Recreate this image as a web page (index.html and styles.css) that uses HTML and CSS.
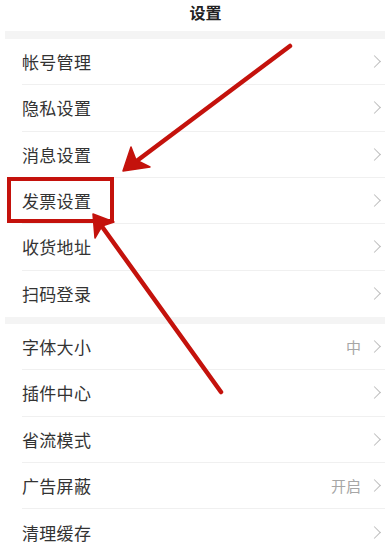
FILE: index.html
```html
<!DOCTYPE html>
<html lang="zh">
<head>
<meta charset="utf-8">
<title>设置</title>
<link rel="stylesheet" href="styles.css">
</head>
<body>
<div class="page">
  <header class="title">设置</header>
  <div class="band"></div>
  <ul class="group">
    <li class="row"><span class="label">帐号管理</span><span class="right"><span class="chev"></span></span></li>
    <li class="row"><span class="label">隐私设置</span><span class="right"><span class="chev"></span></span></li>
    <li class="row"><span class="label">消息设置</span><span class="right"><span class="chev"></span></span></li>
    <li class="row"><span class="label">发票设置</span><span class="right"><span class="chev"></span></span></li>
    <li class="row"><span class="label">收货地址</span><span class="right"><span class="chev"></span></span></li>
    <li class="row"><span class="label">扫码登录</span><span class="right"><span class="chev"></span></span></li>
  </ul>
  <div class="band band2"></div>
  <ul class="group">
    <li class="row"><span class="label">字体大小</span><span class="right"><span class="value">中</span><span class="chev"></span></span></li>
    <li class="row"><span class="label">插件中心</span><span class="right"><span class="chev"></span></span></li>
    <li class="row"><span class="label">省流模式</span><span class="right"><span class="chev"></span></span></li>
    <li class="row"><span class="label">广告屏蔽</span><span class="right"><span class="value">开启</span><span class="chev"></span></span></li>
    <li class="row"><span class="label">清理缓存</span><span class="right"><span class="chev"></span></span></li>
  </ul>
  <svg class="marks" width="385" height="553" viewBox="0 0 385 553">
    <rect x="9" y="179" width="103" height="42" fill="none" stroke="#c4120c" stroke-width="4"/>
    <line x1="290" y1="46" x2="130" y2="166" stroke="#c4120c" stroke-width="4.5" stroke-linecap="round"/>
    <path d="M123 171 L131 147 L136 160 L150 167 Z" fill="#c4120c" stroke="#c4120c" stroke-width="1.5" stroke-linejoin="round"/>
    <line x1="221" y1="392" x2="98" y2="221" stroke="#c4120c" stroke-width="4.5" stroke-linecap="round"/>
    <path d="M93 214 L95 238 L102 226 L114 222 Z" fill="#c4120c" stroke="#c4120c" stroke-width="1.5" stroke-linejoin="round"/>
  </svg>
</div>
</body>
</html>
```
FILE: styles.css
```css
html, body {
  margin: 0;
  padding: 0;
  background: #ffffff;
}
.page {
  position: relative;
  width: 385px;
  height: 553px;
  overflow: hidden;
  font-family: "Noto Sans CJK SC", "Noto Sans", sans-serif;
  color: #333333;
}
.title {
  height: 31px;
  line-height: 24px;
  padding-left: 26px;
  text-align: center;
  font-size: 16px;
  font-weight: 700;
  color: #222222;
}
.band {
  height: 8px;
  margin-left: 5px;
  background: #f4f4f4;
}
.band2 {
  height: 7px;
}
.group {
  list-style: none;
  margin: 0;
  padding: 0;
}
.row {
  height: 46.33px;
  box-sizing: border-box;
  margin-left: 22px;
  padding-right: 4px;
  display: flex;
  align-items: center;
  justify-content: space-between;
  border-bottom: 1px solid #f0f0f0;
}
.row:last-child {
  border-bottom: none;
}
.label {
  font-size: 17px;
  letter-spacing: 0.3px;
  line-height: 1;
}
.right {
  display: flex;
  align-items: center;
  gap: 9px;
}
.value {
  font-size: 15px;
  color: #a6a6a6;
  line-height: 1;
}
.chev {
  width: 8px;
  height: 8px;
  border-right: 1.3px solid #bdbdbd;
  border-top: 1.3px solid #bdbdbd;
  transform: rotate(45deg);
  margin-right: 2px;
}
.marks {
  position: absolute;
  left: 0;
  top: 0;
  pointer-events: none;
}
```
